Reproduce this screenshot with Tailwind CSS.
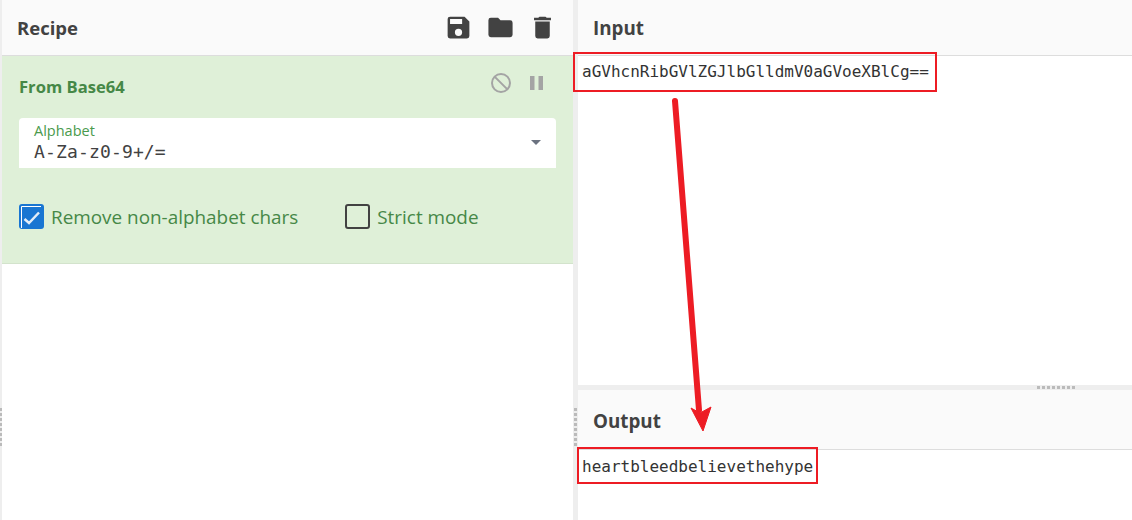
<!doctype html>
<html>

<head>
  <meta charset="UTF-8" />
  <title>CyberChef</title>
  <script src="https://cdn.jsdelivr.net/npm/@tailwindcss/browser@4"></script>
</head>

<body class="bg-white">
  <div class="relative flex h-[520px] w-[1132px] overflow-hidden bg-white font-['Open_Sans',sans-serif] text-[#424242]">
    <!-- left gutter -->
    <div class="relative w-[2px] bg-[#eeeeee]">
      <div class="absolute left-0 top-[408px] h-[38px] w-[2px] bg-[repeating-linear-gradient(to_bottom,#bbbbbb_0,#bbbbbb_3px,transparent_3px,transparent_5px)]"></div>
    </div>

    <!-- recipe -->
    <section class="w-[571px]">
      <header class="flex h-[56px] items-center justify-between border-b border-[#dddddd] bg-[#fafafa] pl-[15px] pr-[16px]">
        <h2 class="pt-[1px] text-[18.500px] font-bold leading-none">Recipe</h2>
        <div class="flex items-center gap-[13px]">
          <svg class="h-[29px] w-[29px]" viewBox="0 0 24 24" fill="#424242"><path d="M17 3H5a2 2 0 0 0-2 2v14a2 2 0 0 0 2 2h14a2 2 0 0 0 2-2V7l-4-4zm-5 16a3 3 0 1 1 0-6 3 3 0 0 1 0 6zm3-10H5V5h10v4z" /></svg>
          <svg class="h-[29px] w-[29px]" viewBox="0 0 24 24" fill="#424242"><path d="M10 4H4a2 2 0 0 0-2 2v12a2 2 0 0 0 2 2h16a2 2 0 0 0 2-2V8a2 2 0 0 0-2-2h-8l-2-2z" /></svg>
          <svg class="h-[29px] w-[29px]" viewBox="0 0 24 24" fill="#424242"><path d="M6 19a2 2 0 0 0 2 2h8a2 2 0 0 0 2-2V7H6v12zM19 4h-3.500l-1-1h-5l-1 1H5v2h14V4z" /></svg>
        </div>
      </header>

      <div class="h-[208px] border-b border-[#d3e3cc] bg-[#dff0d8] pl-[17px] pr-[17px]">
        <div class="flex h-[62px] items-center justify-between">
          <h3 class="text-[16.600px] font-bold leading-none text-[#468847]">From Base64</h3>
          <div class="mb-[8px] flex items-center gap-[17px] pr-[13px]">
            <svg class="h-[24px] w-[24px]" viewBox="0 0 24 24" fill="none" stroke="#a4a4a4" stroke-width="2"><circle cx="12" cy="12" r="9" /><path d="M5.600 5.600l12.800 12.800" /></svg>
            <svg class="h-[14px] w-[13px]" viewBox="0 0 13 14" fill="#a4a4a4"><path d="M0 0h4.500v14H0zM8.500 0H13v14H8.500z" /></svg>
          </div>
        </div>

        <div class="relative h-[50px] rounded-t-[4px] bg-white pl-[15px]">
          <div class="pt-[3px] text-[14.500px] leading-[19px] text-[#4a9a4d]">Alphabet</div>
          <div class="pt-[1px] font-['DejaVu_Sans_Mono',monospace] text-[18px] leading-[21px] tracking-[0.150px] text-[#424242]">A-Za-z0-9+/=</div>
          <div class="absolute right-[15px] top-[22px] h-0 w-0 border-x-[5px] border-t-[5px] border-x-transparent border-t-[#6b7280]"></div>
        </div>

        <div class="mt-[36px] flex items-center">
          <svg class="h-[25px] w-[25px]" viewBox="0 0 25 25" fill="none">
            <rect width="25" height="25" rx="3" fill="#1976d2" />
            <path d="M2.500 24V2.500H22" stroke="#ffffff" />
            <path d="M5.500 15l4.500 4L20 8.500" stroke="#e3edf7" stroke-width="2.500" />
          </svg>
          <span class="ml-[7px] pt-[2px] text-[18.900px] leading-none text-[#468847]">Remove non-alphabet chars</span>
          <span class="ml-[47px] h-[25px] w-[25px] rounded-[3px] border-2 border-[#424242]"></span>
          <span class="ml-[7px] pt-[2px] text-[18.900px] leading-none text-[#468847]">Strict mode</span>
        </div>
      </div>
    </section>

    <!-- vertical gutter -->
    <div class="relative w-[5px] bg-[#eeeeee]">
      <div class="absolute left-[1px] top-[408px] h-[38px] w-[3px] bg-[repeating-linear-gradient(to_bottom,#bbbbbb_0,#bbbbbb_3px,transparent_3px,transparent_5px)]"></div>
    </div>

    <!-- input / output -->
    <main class="flex flex-1 flex-col">
      <header class="flex h-[56px] items-center border-b border-[#dddddd] bg-[#fafafa] pl-[15px] pt-[2px]">
        <h2 class="text-[18.800px] font-bold leading-none">Input</h2>
      </header>
      <div class="h-[329px] pl-[4px] pt-[5px] font-['DejaVu_Sans_Mono',monospace] text-[16px] leading-[21px] text-[#333333]">aGVhcnRibGVlZGJlbGlldmV0aGVoeXBlCg==</div>
      <div class="relative h-[5px] bg-[#eeeeee]">
        <div class="absolute left-[459px] top-[1px] h-[3px] w-[38px] bg-[repeating-linear-gradient(to_right,#bbbbbb_0,#bbbbbb_3px,transparent_3px,transparent_5px)]"></div>
      </div>
      <header class="flex h-[60px] items-center border-b border-[#dddddd] bg-[#fafafa] pl-[15px] pt-[3px]">
        <h2 class="text-[18.800px] font-bold leading-none">Output</h2>
      </header>
      <div class="flex-1 pl-[4px] pt-[6px] font-['DejaVu_Sans_Mono',monospace] text-[16px] leading-[21px] text-[#333333]">heartbleedbelievethehype</div>
    </main>

    <!-- annotations drawn over the screenshot -->
    <svg class="absolute left-0 top-0" width="1132" height="520" viewBox="0 0 1132 520" fill="none">
      <rect x="574" y="53" width="362" height="38" stroke="#ed1c24" stroke-width="2" />
      <rect x="578" y="448" width="239" height="35" stroke="#ed1c24" stroke-width="2" />
      <path d="M675 101L699 410" stroke="#ed1c24" stroke-width="6" stroke-linecap="round" />
      <path d="M691 408L700 413L711 407L703 431Z" fill="#ed1c24" stroke="#ed1c24" />
    </svg>
  </div>
</body>

</html>
